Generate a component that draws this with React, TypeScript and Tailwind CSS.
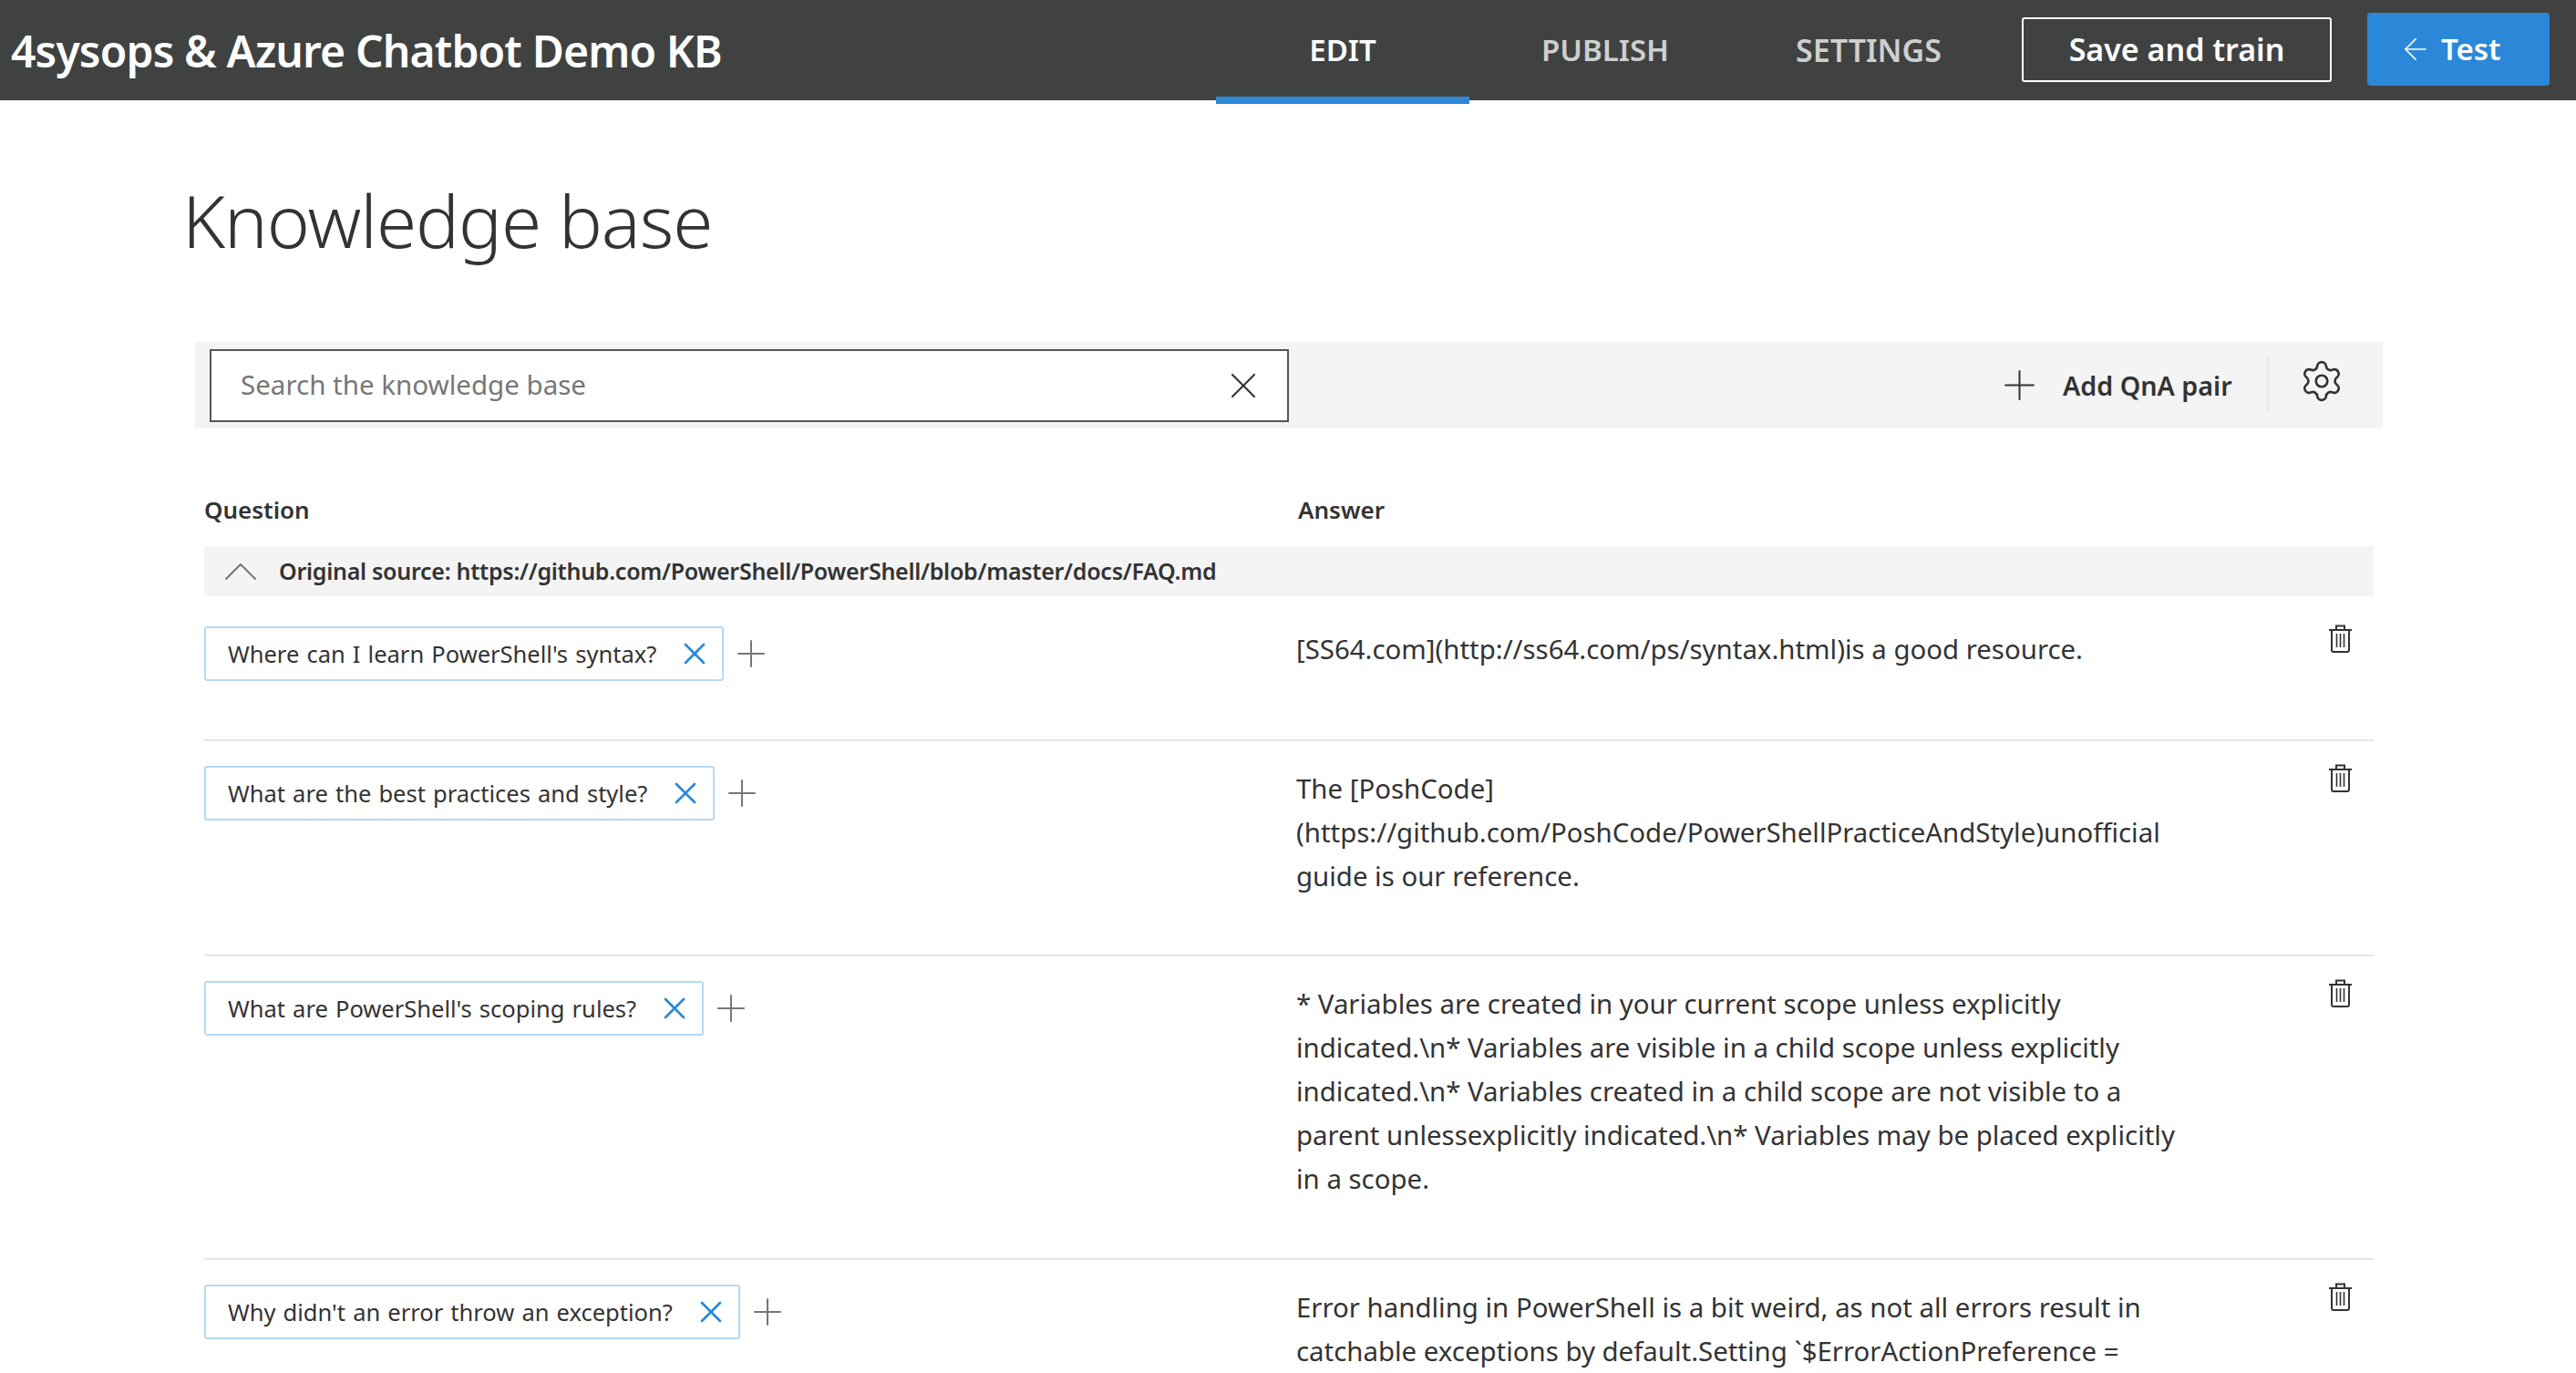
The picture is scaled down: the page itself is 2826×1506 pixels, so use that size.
import React from "react";
import { ArrowLeft, ChevronUp, Plus, Settings, X } from "lucide-react";

const font = { fontFamily: '"Noto Sans", "Open Sans", sans-serif' };

interface Row {
  question: string;
  answer: string[];
  height: string;
  first?: boolean;
}

const rows: Row[] = [
  {
    question: "Where can I learn PowerShell's syntax?",
    answer: ["[SS64.com](http://ss64.com/ps/syntax.html)is a good resource."],
    height: "h-[159px]",
    first: true,
  },
  {
    question: "What are the best practices and style?",
    answer: [
      "The [PoshCode]",
      "(https://github.com/PoshCode/PowerShellPracticeAndStyle)unofficial",
      "guide is our reference.",
    ],
    height: "h-[236px]",
  },
  {
    question: "What are PowerShell's scoping rules?",
    answer: [
      "* Variables are created in your current scope unless explicitly",
      "indicated.\\n* Variables are visible in a child scope unless explicitly",
      "indicated.\\n* Variables created in a child scope are not visible to a",
      "parent unlessexplicitly indicated.\\n* Variables may be placed explicitly",
      "in a scope.",
    ],
    height: "h-[333px]",
  },
  {
    question: "Why didn't an error throw an exception?",
    answer: [
      "Error handling in PowerShell is a bit weird, as not all errors result in",
      "catchable exceptions by default.Setting `$ErrorActionPreference =",
    ],
    height: "h-[300px]",
  },
];

// the icon font's delete glyph: lid, handle, body and three bars
const TrashIcon = () => (
  <svg width="25" height="31" viewBox="0 0 25 31" fill="none" stroke="#333" strokeWidth="2">
    <path d="M0 6h25" />
    <path d="M8 6V1.5h9V6" />
    <path d="M3 6v22a2 2 0 0 0 2 2h15a2 2 0 0 0 2-2V6" />
    <path d="M8.5 10v15M12.5 10v15M16.5 10v15" strokeWidth="1.6" />
  </svg>
);

const QnaRow = ({ row }: { row: Row }) => (
  <div className={`flex border-b-2 border-[#e6e6e6] ${row.height} ${row.first ? "pt-[6px]" : ""}`}>
    <div className="w-[1198px] shrink-0 pt-[27px]">
      <div className="flex items-center">
        <div className="flex h-[60px] items-center rounded-[3px] border-2 border-[#b5daf5] pl-6 pr-[10px] text-[25.5px] text-[#333] [word-spacing:1.5px]">
          <span>{row.question}</span>
          <X className="ml-[22px] h-[40px] w-[40px] text-[#2b88d8]" strokeWidth={1.6} />
        </div>
        <Plus className="ml-[6px] h-[48px] w-[48px] text-[#777]" strokeWidth={1} />
      </div>
    </div>
    <div className="w-[1000px] shrink-0 pt-[28px] text-[29.4px] leading-[48px] text-[#333]">
      {row.answer.map((line) => (
        <div key={line} className="whitespace-nowrap">
          {line}
        </div>
      ))}
    </div>
    <div className="flex flex-1 justify-end pr-[24px] pt-[25px]">
      <TrashIcon />
    </div>
  </div>
);

export default function App() {
  return (
    <div className="h-screen overflow-hidden bg-white" style={font}>
      <header className="flex h-[110px] items-center bg-[#404241] text-white">
        <div className="w-[1334px] shrink-0 pl-3 pt-[2px] text-[48px] font-semibold tracking-[-0.85px]">
          4sysops &amp; Azure Chatbot Demo KB
        </div>
        <nav className="flex h-full text-[33px] font-semibold">
          <div className="relative flex w-[278px] items-center justify-center">
            EDIT
            <div className="absolute -bottom-[4px] left-0 right-0 h-[8px] bg-[#2b88d8]" />
          </div>
          <div className="flex w-[298px] items-center justify-center text-[#cfcfcf]">PUBLISH</div>
          <div className="flex w-[280px] items-center justify-center text-[34px] text-[#cfcfcf]">SETTINGS</div>
        </nav>
        <button className="mb-[2px] ml-[28px] flex h-[71px] w-[340px] items-center justify-center rounded-[3px] border-2 border-white text-[34px] font-semibold">
          Save and train
        </button>
        <button className="mb-[2px] ml-[39px] flex h-[80px] w-[200px] items-center rounded-[4px] bg-[#2b88d8] pl-[34px] text-[33px] font-semibold">
          <ArrowLeft className="h-[38px] w-[38px]" strokeWidth={1} />
          <span className="ml-[9px]">Test</span>
        </button>
      </header>

      <main className="px-[200px]">
        <h1 className="pt-[79px] text-[80px] font-light leading-[104px] tracking-[-1px] text-[#333]">Knowledge base</h1>

        <div className="ml-[14px] mt-[82px] flex h-[95px] w-[2400px] items-center bg-[#f4f4f4] pl-4">
          <div className="flex h-[80px] w-[1184px] items-center justify-between border-2 border-[#555] bg-white pl-8 pr-[24px] text-[29.5px] text-[#777]">
            <span>Search the knowledge base</span>
            <X className="h-[48px] w-[48px] text-[#333]" strokeWidth={1.1} />
          </div>
          <Plus className="ml-[775px] h-[53px] w-[53px] shrink-0 text-[#333]" strokeWidth={0.9} />
          <span className="ml-[21px] whitespace-nowrap text-[28.7px] font-semibold text-[#333]">Add QnA pair</span>
          <div className="mb-[5px] ml-[37px] h-[61px] w-[5px] shrink-0 bg-[#ececec]" />
          <Settings className="mb-[10px] ml-[31px] h-[50px] w-[50px] shrink-0 text-[#333]" strokeWidth={1.3} />
        </div>

        <div className="ml-[24px] w-[2380px]">
          <div className="flex h-[129px] items-end pb-[20px] text-[26px] font-semibold text-[#333]">
            <div className="w-[1200px]">Question</div>
            <div>Answer</div>
          </div>
          <div className="flex h-[55px] items-center bg-[#f4f4f4] pl-[8px] text-[25px] font-semibold tracking-[-0.27px] text-[#333]">
            <ChevronUp className="h-[64px] w-[64px] text-[#777]" strokeWidth={0.75} />
            <span className="ml-[10px]">Original source: https://github.com/PowerShell/PowerShell/blob/master/docs/FAQ.md</span>
          </div>
          {rows.map((row) => (
            <QnaRow key={row.question} row={row} />
          ))}
        </div>
      </main>
    </div>
  );
}
